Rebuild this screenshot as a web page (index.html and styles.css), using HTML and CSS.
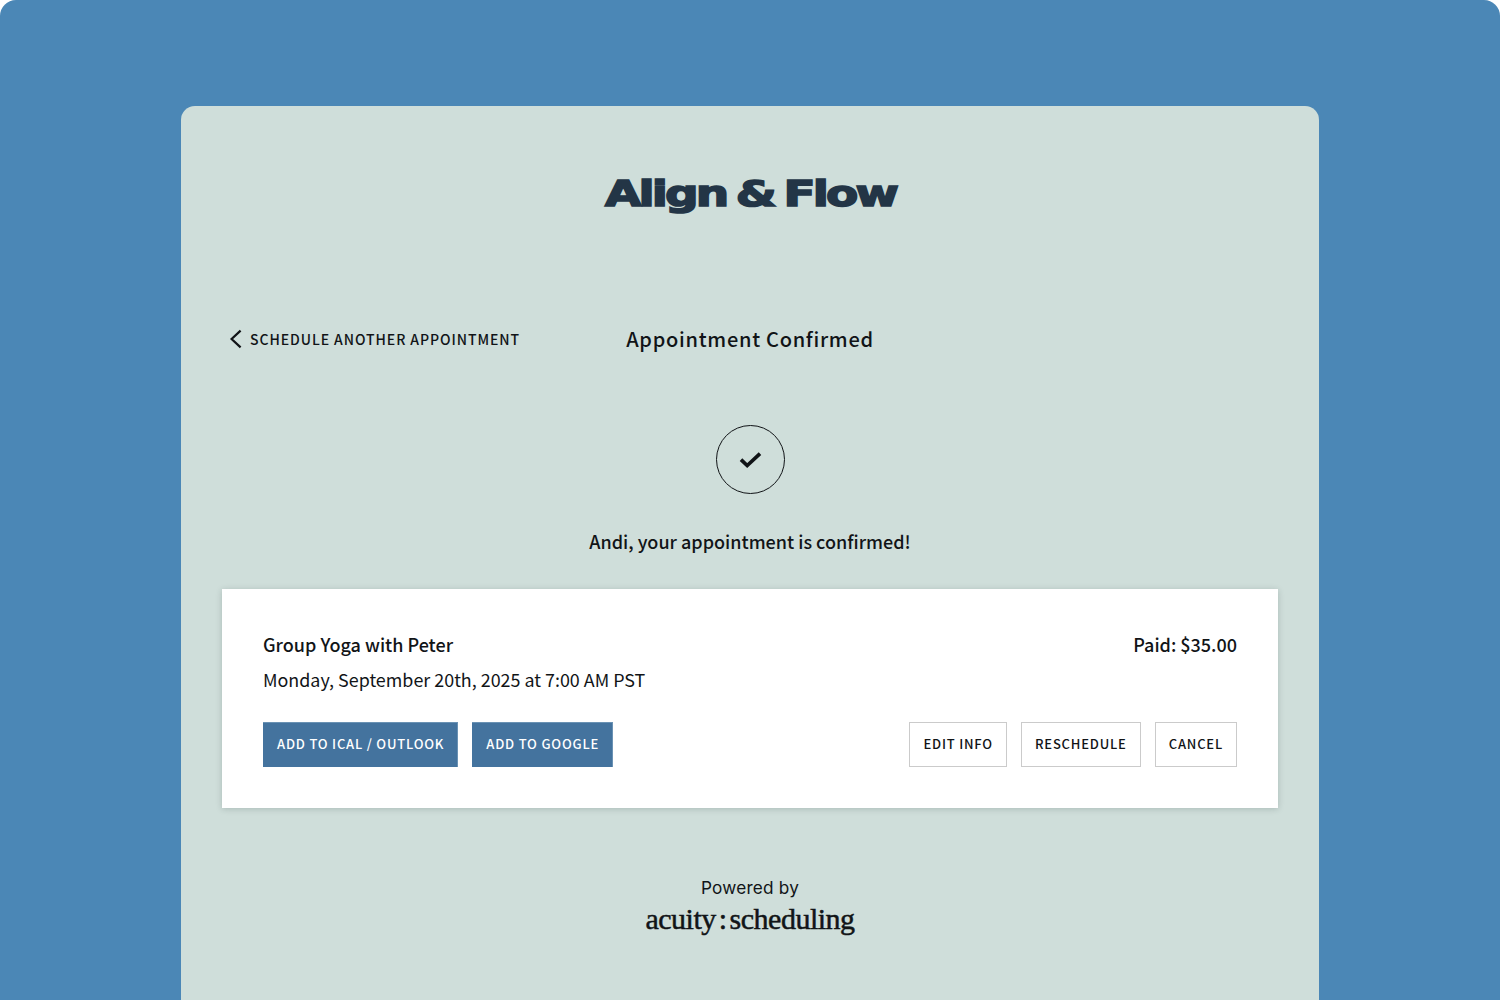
FILE: index.html
```html
<!DOCTYPE html>
<html lang="en">
<head>
<meta charset="utf-8">
<title>Appointment Confirmed</title>
<link rel="stylesheet" href="styles.css">
</head>
<body>
<div class="frame">
  <main class="sheet">
    <div class="logo"><span class="logo-text">Align &amp; Flow</span></div>
    <div class="head">
      <a class="back" href="#">
        <svg class="chev" width="14" height="20" viewBox="0 0 14 20"><path d="M12.6 1.6 L3.6 10 L12.6 18.4" fill="none" stroke="#111417" stroke-width="2.2"/></svg>
        <span>SCHEDULE ANOTHER APPOINTMENT</span>
      </a>
      <h1 class="title">Appointment Confirmed</h1>
    </div>
    <div class="circle">
      <svg width="24" height="20" viewBox="0 0 24 20"><path d="M3 9.6 L9.2 15.6 L22 3.6" fill="none" stroke="#111417" stroke-width="3.6"/></svg>
    </div>
    <p class="msg">Andi, your appointment is confirmed!</p>
    <section class="panel">
      <div class="row">
        <div class="name">Group Yoga with Peter</div>
        <div class="name">Paid: $35.00</div>
      </div>
      <div class="when">Monday, September 20th, 2025 at 7:00 AM PST</div>
      <div class="row actions">
        <div class="group">
          <a class="btn primary" href="#">ADD TO ICAL / OUTLOOK</a>
          <a class="btn primary" href="#">ADD TO GOOGLE</a>
        </div>
        <div class="group">
          <a class="btn" href="#">EDIT INFO</a>
          <a class="btn" href="#">RESCHEDULE</a>
          <a class="btn" href="#">CANCEL</a>
        </div>
      </div>
    </section>
    <footer class="foot">
      <div class="powered">Powered by</div>
      <div class="acuity">acuity<span class="colon">:</span>scheduling</div>
    </footer>
  </main>
</div>
</body>
</html>
```
FILE: styles.css
```css
* { box-sizing: border-box; }
html, body { margin: 0; padding: 0; background: #fff; }
body { font-family: "Noto Sans CJK JP", "Noto Sans", sans-serif; color: #111417; }
.frame {
  width: 1500px; height: 1000px; overflow: hidden;
  background: #4b87b6;
  border-radius: 16px 16px 0 0;
  padding: 106px 181px 0;
}
.sheet {
  width: 1138px; height: 894px;
  background: #cfdeda;
  border-radius: 14px 14px 0 0;
  padding: 0 41px;
  display: flex; flex-direction: column; align-items: center;
}
.logo {
  height: 52px; margin-top: 62px; width: 100%;
  display: flex; align-items: center; justify-content: center;
}
.logo-text {
  font-family: "DejaVu Sans", sans-serif;
  font-weight: 700; font-size: 36px; line-height: 52px;
  letter-spacing: -2.2px; word-spacing: -3px; white-space: nowrap;
  color: #233546;
  -webkit-text-stroke: 1.6px #233546;
  display: inline-block;
  transform: scaleX(1.305);
}
.head {
  width: 100%; height: 40px; margin-top: 99px; position: relative;
  display: flex; align-items: center; justify-content: center;
}
.back {
  position: absolute; left: 6px; top: 0; height: 40px;
  display: flex; align-items: center; gap: 8px;
  color: #111417; text-decoration: none;
  font-size: 14px; font-weight: 500; letter-spacing: 0.93px;
}
.chev { display: block; }
.title { margin: 0; font-size: 20px; font-weight: 500; letter-spacing: 0.72px; line-height: 40px; }
.circle {
  width: 69px; height: 69px; margin-top: 66px;
  border: 1px solid #111417; border-radius: 50%;
  display: flex; align-items: center; justify-content: center;
}
.msg { margin: 33px 0 0; font-size: 18px; font-weight: 500; line-height: 28px; height: 28px; }
.panel {
  width: 1056px; height: 219px; margin-top: 34px;
  background: #fff; padding: 40px 41px 41px;
  box-shadow: 0 1px 6px rgba(40, 60, 60, 0.22);
}
.row { display: flex; justify-content: space-between; align-items: center; }
.name { font-size: 18px; font-weight: 500; line-height: 30px; }
.when { font-size: 17.9px; line-height: 30px; margin-top: 5px; font-weight: 400; }
.actions { margin-top: 28px; }
.group { display: flex; gap: 14px; }
.btn {
  height: 45px; padding: 0 13px 3px;
  display: flex; align-items: center;
  border: 1px solid #cbcbcb; background: #fff;
  color: #111417; text-decoration: none;
  font-size: 13px; font-weight: 500; letter-spacing: 0.8px;
  white-space: nowrap;
}
.btn.primary { background: #44739e; border-color: #6a92b4; border-width: 1px 0 0 0; border-right: 1px solid #6a92b4; color: #fff; padding: 0 13px 3px 14px; }
.foot { margin-top: 67px; text-align: center; }
.powered { font-family: Inter, sans-serif; font-size: 17.2px; line-height: 26px; letter-spacing: 0.2px; color: #111417; }
.acuity {
  font-family: "Liberation Serif", serif; font-size: 30px; line-height: 36px;
  letter-spacing: -0.5px; color: #111417;
  -webkit-text-stroke: 0.5px #111417;
}
.colon { margin: 0 3px; }
```
